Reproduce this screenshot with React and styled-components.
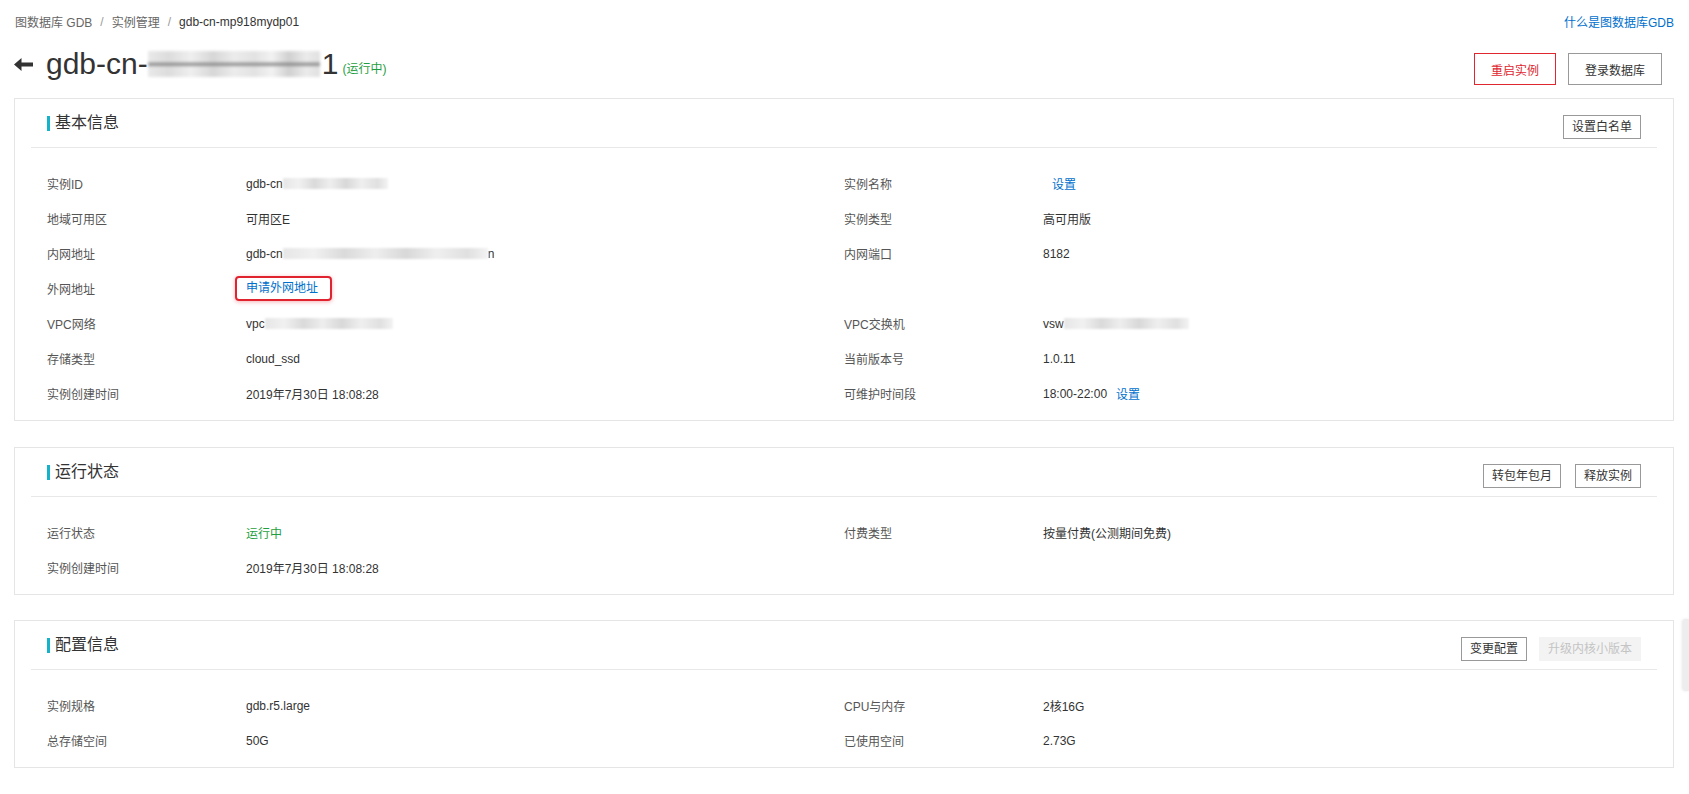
import React from "react";
import styled, { createGlobalStyle } from "styled-components";

const GlobalStyle = createGlobalStyle`
  html, body { margin: 0; padding: 0; background: #fff; }
  body {
    font-family: "Liberation Sans", Arial, "Noto Sans CJK SC", sans-serif;
    font-size: 12px;
    color: #333;
  }
  * { box-sizing: border-box; }
`;

const Page = styled.div`
  padding: 0 15px 0 14px;
`;

const TopBar = styled.div`
  height: 43px;
  display: flex;
  align-items: center;
  justify-content: space-between;
`;

const Crumbs = styled.div`
  display: flex;
  align-items: center;
  padding-left: 1px;
  font-size: 12px;
  color: #666;
`;

const Crumb = styled.span`
  color: ${(p) => (p.$current ? "#333" : "#666")};
`;

const CrumbSep = styled.span`
  color: #999;
  margin: 0 8px;
`;

const Link = styled.a`
  color: #0070cc;
  font-size: 12px;
  text-decoration: none;
  cursor: pointer;
  margin-left: ${(p) => p.$ml || 0}px;
`;

const TitleRow = styled.div`
  display: flex;
  align-items: center;
  justify-content: space-between;
`;

const TitleLeft = styled.div`
  display: flex;
  align-items: center;
  height: 34px;
`;

const BackIcon = styled.svg`
  width: 19px;
  height: 13px;
  margin-right: 13px;
  display: block;
`;

const InstanceName = styled.h1`
  margin: 0;
  font-size: 30px;
  font-weight: normal;
  line-height: 34px;
  color: #333;
  display: flex;
  align-items: center;
`;

const TitleMask = styled.span`
  display: inline-block;
  width: 172px;
  height: 26px;
  margin: 0 2px 0 0;
  background:
    linear-gradient(to bottom, rgba(255,255,255,0) 0, rgba(255,255,255,0) 42%, rgba(120,120,120,0.7) 46%, rgba(120,120,120,0.7) 56%, rgba(255,255,255,0) 60%),
    linear-gradient(to right, #e9e9e9 0, #dcdcdc 12%, #efefef 25%, #d6d6d6 38%, #ececec 50%, #e2e2e2 62%, #f2f2f2 72%, #d0d0d0 82%, #ebebeb 92%, #e0e0e0 100%);
  filter: blur(1.5px);
`;

const Status = styled.span`
  font-size: 12px;
  color: #1e9e3e;
  margin-left: 4px;
  margin-top: 6px;
`;

const Actions = styled.div`
  display: flex;
  gap: ${(p) => p.$gap || 12}px;
  margin-top: ${(p) => p.$mt || 0}px;
  margin-right: ${(p) => p.$mr || 0}px;
`;

const BigButton = styled.button`
  height: 32px;
  padding: 0 16px;
  background: #fff;
  border: 1px solid ${(p) => (p.$danger ? "#e0262f" : "#999")};
  color: ${(p) => (p.$danger ? "#e0262f" : "#333")};
  font-family: inherit;
  font-size: 12px;
  cursor: pointer;
`;

const SmallButton = styled.button`
  height: 24px;
  padding: 0 8px;
  background: ${(p) => (p.disabled ? "#f3f3f3" : "#fff")};
  border: 1px solid ${(p) => (p.disabled ? "#f3f3f3" : "#999")};
  color: ${(p) => (p.disabled ? "#c4c4c4" : "#333")};
  font-family: inherit;
  font-size: 12px;
  line-height: 22px;
  cursor: ${(p) => (p.disabled ? "not-allowed" : "pointer")};
`;

const Card = styled.section`
  border: 1px solid #e5e5e5;
  margin-top: ${(p) => p.$mt || 25}px;
`;

const CardHeader = styled.div`
  margin: 0 16px;
  height: 49px;
  padding: 16px 16px 0;
  border-bottom: 1px solid #e8e8e8;
  display: flex;
  align-items: flex-start;
  justify-content: space-between;
`;

const CardTitle = styled.h2`
  margin: 0;
  display: flex;
  align-items: center;
  height: 16px;
  font-size: 16px;
  line-height: 16px;
  font-weight: normal;
  color: #333;
  &::before {
    content: "";
    display: block;
    width: 3px;
    height: 15px;
    background: #15b3c9;
    margin-right: 5px;
  }
`;

const CardBody = styled.div`
  padding: 18px 32px 9px;
  display: grid;
  grid-template-columns: 1fr 1fr;
`;

const Field = styled.div`
  height: 35px;
  display: grid;
  grid-template-columns: 199px 1fr;
  align-items: center;
`;

const Label = styled.span`
  color: #555;
`;

const Value = styled.span`
  color: ${(p) => (p.$success ? "#1e9e3e" : "#333")};
  display: flex;
  align-items: center;
  white-space: nowrap;
`;

const Mask = styled.span`
  display: inline-block;
  width: ${(p) => p.$w}px;
  height: 11px;
  background: linear-gradient(to right, #e6e6e6 0, #f1f1f1 15%, #dadada 30%, #eeeeee 45%, #d8d8d8 60%, #efefef 75%, #e0e0e0 90%, #f3f3f3 100%);
  filter: blur(1.2px);
`;

const Highlight = styled.a`
  display: inline-block;
  margin-left: -11px;
  padding: 2px 12px 2px 9px;
  border: 2px solid #e0232e;
  border-radius: 4px;
  box-shadow: 0 1px 4px rgba(224, 35, 46, 0.35);
  color: #0070cc;
  font-size: 12px;
  line-height: 17px;
  text-decoration: none;
`;

const SideTab = styled.div`
  position: fixed;
  right: 0;
  top: 619px;
  width: 6px;
  height: 72px;
  background: #ededed;
  box-shadow: -1px 0 3px rgba(0, 0, 0, 0.1);
  border-radius: 3px 0 0 3px;
`;

function BackArrow() {
  return (
    <BackIcon viewBox="0 0 19 13">
      <path d="M0 6.5 L7.5 0 L7.5 4.6 L19 4.6 L19 8.4 L7.5 8.4 L7.5 13 Z" fill="#333" />
    </BackIcon>
  );
}

function InfoGrid({ rows }) {
  return (
    <CardBody>
      {rows.map((pair, i) => (
        <React.Fragment key={i}>
          <Field>
            {pair[0] && (
              <>
                <Label>{pair[0][0]}</Label>
                <Value>{pair[0][1]}</Value>
              </>
            )}
          </Field>
          <Field>
            {pair[1] && (
              <>
                <Label>{pair[1][0]}</Label>
                <Value>{pair[1][1]}</Value>
              </>
            )}
          </Field>
        </React.Fragment>
      ))}
    </CardBody>
  );
}

export default function App() {
  const basicRows = [
    [["实例ID", <>gdb-cn<Mask $w={105} /></>], ["实例名称", <Link $ml={9}>设置</Link>]],
    [["地域可用区", "可用区E"], ["实例类型", "高可用版"]],
    [["内网地址", <>gdb-cn<Mask $w={205} />n</>], ["内网端口", "8182"]],
    [["外网地址", <Highlight>申请外网地址</Highlight>], null],
    [["VPC网络", <>vpc<Mask $w={128} /></>], ["VPC交换机", <>vsw<Mask $w={125} /></>]],
    [["存储类型", "cloud_ssd"], ["当前版本号", "1.0.11"]],
    [["实例创建时间", "2019年7月30日 18:08:28"], ["可维护时间段", <>18:00-22:00<Link $ml={9}>设置</Link></>]],
  ];

  const statusRows = [
    [["运行状态", <Value $success>运行中</Value>], ["付费类型", "按量付费(公测期间免费)"]],
    [["实例创建时间", "2019年7月30日 18:08:28"], null],
  ];

  const configRows = [
    [["实例规格", "gdb.r5.large"], ["CPU与内存", "2核16G"]],
    [["总存储空间", "50G"], ["已使用空间", "2.73G"]],
  ];

  return (
    <>
      <GlobalStyle />
      <Page>
        <TopBar>
          <Crumbs>
            <Crumb>图数据库 GDB</Crumb>
            <CrumbSep>/</CrumbSep>
            <Crumb>实例管理</Crumb>
            <CrumbSep>/</CrumbSep>
            <Crumb $current>gdb-cn-mp918mydp01</Crumb>
          </Crumbs>
          <Link>什么是图数据库GDB</Link>
        </TopBar>

        <TitleRow>
          <TitleLeft>
            <BackArrow />
            <InstanceName>
              gdb-cn-<TitleMask />1
            </InstanceName>
            <Status>(运行中)</Status>
          </TitleLeft>
          <Actions $mt={10} $mr={12}>
            <BigButton $danger>重启实例</BigButton>
            <BigButton>登录数据库</BigButton>
          </Actions>
        </TitleRow>

        <Card $mt={13}>
          <CardHeader>
            <CardTitle>基本信息</CardTitle>
            <SmallButton>设置白名单</SmallButton>
          </CardHeader>
          <InfoGrid rows={basicRows} />
        </Card>

        <Card $mt={26}>
          <CardHeader>
            <CardTitle>运行状态</CardTitle>
            <Actions $gap={14}>
              <SmallButton>转包年包月</SmallButton>
              <SmallButton>释放实例</SmallButton>
            </Actions>
          </CardHeader>
          <InfoGrid rows={statusRows} />
        </Card>

        <Card $mt={25}>
          <CardHeader>
            <CardTitle>配置信息</CardTitle>
            <Actions $gap={12}>
              <SmallButton>变更配置</SmallButton>
              <SmallButton disabled>升级内核小版本</SmallButton>
            </Actions>
          </CardHeader>
          <InfoGrid rows={configRows} />
        </Card>
      </Page>
      <SideTab />
    </>
  );
}
